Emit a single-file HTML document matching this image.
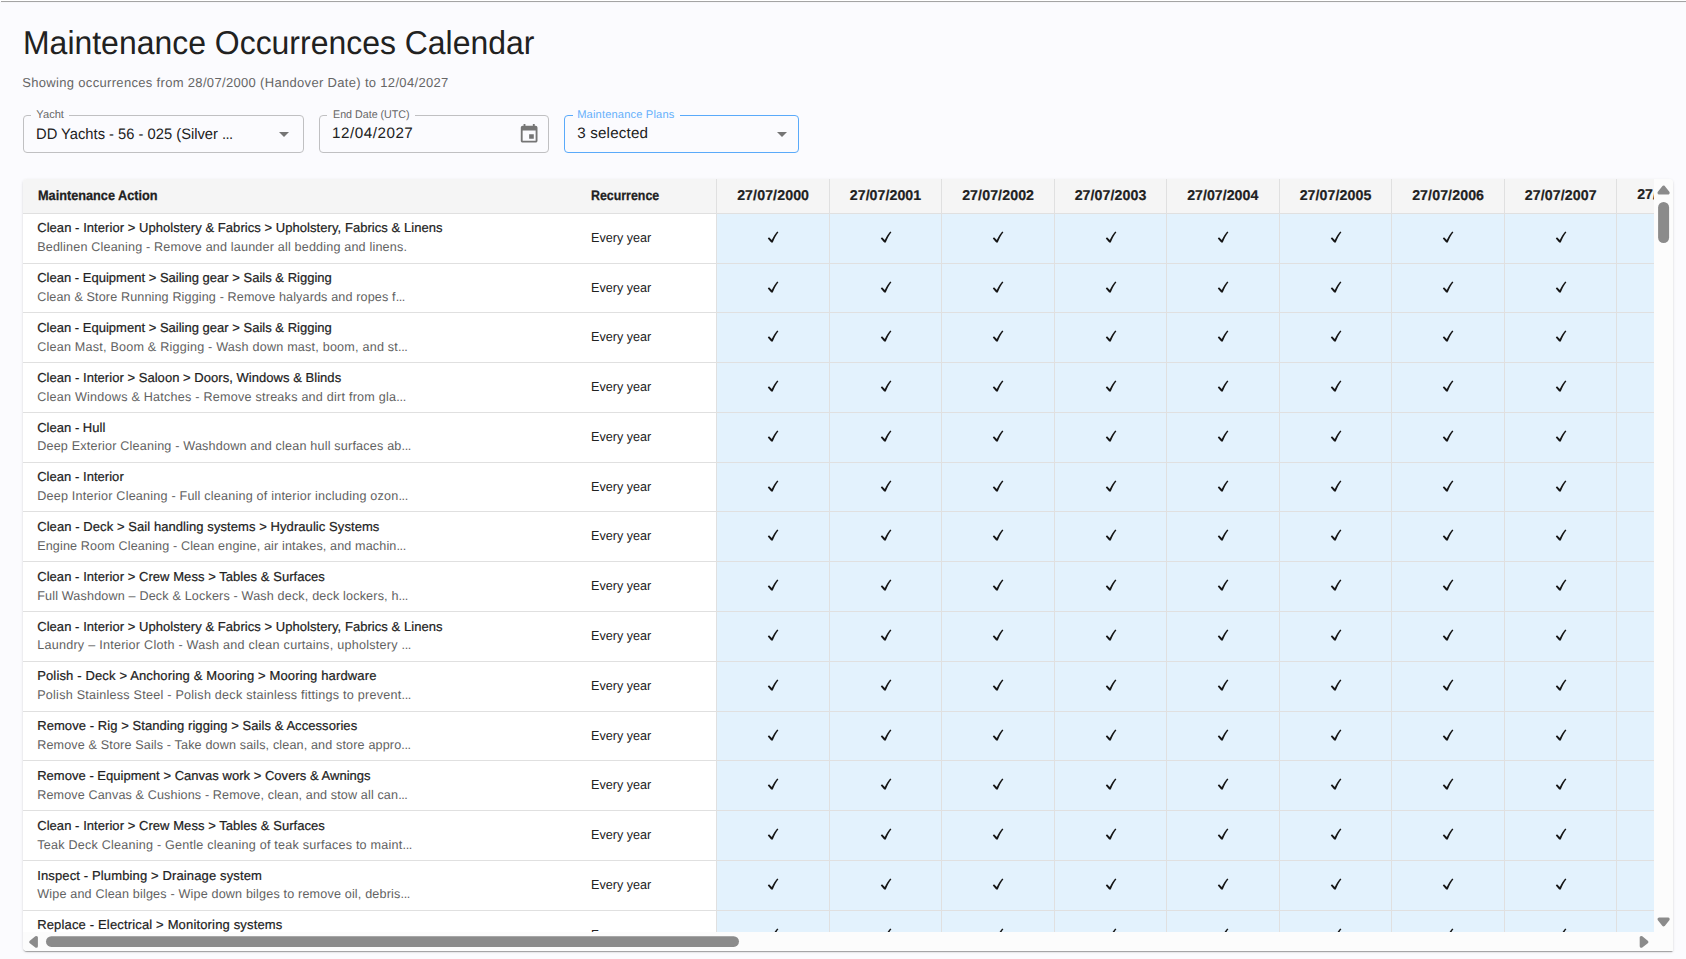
<!DOCTYPE html>
<html><head><meta charset="utf-8"><title>Maintenance Occurrences Calendar</title>
<style>
html,body{margin:0;padding:0;}
body{width:1686px;height:959px;overflow:hidden;position:relative;background:#fbfbfe;font-family:"Liberation Sans", sans-serif;}
.b{position:absolute;display:block;}
.t{position:absolute;height:0;line-height:0;white-space:nowrap;transform-origin:0 0;text-rendering:geometricPrecision;font-family:"Liberation Sans", sans-serif;}
.paper{background:#fff;border-radius:4px 4px 1px 4px;box-shadow:0px 2px 1px -1px rgba(0,0,0,0.2),0px 1px 1px 0px rgba(0,0,0,0.14),0px 1px 3px 0px rgba(0,0,0,0.12);}
</style></head><body>
<div class="b " style="left:0px;top:0px;width:1686px;height:1px;background:#fff;"></div>
<div class="b " style="left:1px;top:1px;width:1685px;height:1px;background:#a4a4a4;"></div>
<div class="b " style="left:0px;top:2px;width:1686px;height:1px;background:#f6f6f9;"></div>
<div class="t " id="t1" style="left:22.71px;top:43.00px;font-size:33px;color:#212121;transform:scaleX(0.9681);">Maintenance Occurrences Calendar</div>
<div class="t " id="t2" style="left:22.22px;top:83.00px;font-size:13px;color:#666666;letter-spacing:0.3228px;">Showing occurrences from 28/07/2000 (Handover Date) to 12/04/2027</div>
<div class="b" style="left:23px;top:115px;width:281px;height:38px;box-sizing:border-box;border:1px solid #c0c0c2;border-radius:4px;"></div>
<div class="b " style="left:31px;top:114px;width:38px;height:3px;background:#fbfbfe;"></div>
<div class="t " id="t3" style="left:36.36px;top:115.00px;font-size:11.14px;color:#666666;letter-spacing:-0.0067px;">Yacht</div>
<div class="t " id="t4" style="left:36.35px;top:135.00px;font-size:15.2px;color:#212121;transform:scaleX(0.9696);">DD Yachts - 56 - 025 (Silver <span style="letter-spacing:-0.65px">...</span></div>
<svg class="b" style="left:272.4px;top:122px" width="24" height="24" viewBox="0 0 24 24"><path d="M7 10l5 5 5-5z" fill="#757575"/></svg>
<div class="b" style="left:319px;top:115px;width:230px;height:38px;box-sizing:border-box;border:1px solid #c0c0c2;border-radius:4px;"></div>
<div class="b " style="left:327px;top:114px;width:88px;height:3px;background:#fbfbfe;"></div>
<div class="t " id="t5" style="left:332.54px;top:115.00px;font-size:11.14px;color:#666666;transform:scaleX(0.9609);">End Date (UTC)</div>
<div class="t " id="t6" style="left:331.98px;top:134.00px;font-size:15.2px;color:#212121;letter-spacing:0.5371px;">12/04/2027</div>
<svg class="b" style="left:518.2px;top:123.3px" width="22.29" height="22.29" viewBox="0 0 24 24"><path d="M17 12h-5v5h5v-5zM16 1v2H8V1H6v2H5c-1.11 0-1.99.9-1.99 2L3 19c0 1.1.89 2 2 2h14c1.1 0 2-.9 2-2V5c0-1.1-.9-2-2-2h-1V1h-2zm3 18H5V8h14v11z" fill="#757575"/></svg>
<div class="b" style="left:564px;top:115px;width:235px;height:38px;box-sizing:border-box;border:1px solid #5aaafa;border-radius:4px;"></div>
<div class="b " style="left:573px;top:114px;width:107px;height:3px;background:#fbfbfe;"></div>
<div class="t " id="t7" style="left:577.20px;top:115.00px;font-size:11.14px;color:#64b0fb;letter-spacing:0.1575px;">Maintenance Plans</div>
<div class="t " id="t8" style="left:577.24px;top:134.00px;font-size:15.2px;color:#212121;letter-spacing:0.1636px;">3 selected</div>
<svg class="b" style="left:769.5px;top:122px" width="24" height="24" viewBox="0 0 24 24"><path d="M7 10l5 5 5-5z" fill="#757575"/></svg>
<div class="b paper" style="left:23px;top:179px;width:1650px;height:772px;"></div>
<div class="b" id="clip" style="left:23px;top:179px;width:1631px;height:753px;overflow:hidden;border-radius:4px 0 0 0;">
<div class="b" style="left:-23px;top:-179px;width:1686px;height:959px;">
<div class="b " style="left:23px;top:179px;width:1631px;height:34px;background:#f5f5f5;"></div>
<div class="b " style="left:23px;top:213px;width:1631px;height:1px;background:#e0e0e0;"></div>
<div class="b " style="left:717px;top:214px;width:937px;height:718px;background:#e3f2fd;"></div>
<div class="b " style="left:23px;top:263px;width:1631px;height:1px;background:#e0e0e0;"></div>
<div class="b " style="left:23px;top:312px;width:1631px;height:1px;background:#e0e0e0;"></div>
<div class="b " style="left:23px;top:362px;width:1631px;height:1px;background:#e0e0e0;"></div>
<div class="b " style="left:23px;top:412px;width:1631px;height:1px;background:#e0e0e0;"></div>
<div class="b " style="left:23px;top:462px;width:1631px;height:1px;background:#e0e0e0;"></div>
<div class="b " style="left:23px;top:511px;width:1631px;height:1px;background:#e0e0e0;"></div>
<div class="b " style="left:23px;top:561px;width:1631px;height:1px;background:#e0e0e0;"></div>
<div class="b " style="left:23px;top:611px;width:1631px;height:1px;background:#e0e0e0;"></div>
<div class="b " style="left:23px;top:661px;width:1631px;height:1px;background:#e0e0e0;"></div>
<div class="b " style="left:23px;top:711px;width:1631px;height:1px;background:#e0e0e0;"></div>
<div class="b " style="left:23px;top:760px;width:1631px;height:1px;background:#e0e0e0;"></div>
<div class="b " style="left:23px;top:810px;width:1631px;height:1px;background:#e0e0e0;"></div>
<div class="b " style="left:23px;top:860px;width:1631px;height:1px;background:#e0e0e0;"></div>
<div class="b " style="left:23px;top:910px;width:1631px;height:1px;background:#e0e0e0;"></div>
<div class="b " style="left:716px;top:179px;width:1px;height:753px;background:#e0e0e0;"></div>
<div class="b " style="left:829px;top:179px;width:1px;height:753px;background:#e0e0e0;"></div>
<div class="b " style="left:941px;top:179px;width:1px;height:753px;background:#e0e0e0;"></div>
<div class="b " style="left:1054px;top:179px;width:1px;height:753px;background:#e0e0e0;"></div>
<div class="b " style="left:1166px;top:179px;width:1px;height:753px;background:#e0e0e0;"></div>
<div class="b " style="left:1279px;top:179px;width:1px;height:753px;background:#e0e0e0;"></div>
<div class="b " style="left:1391px;top:179px;width:1px;height:753px;background:#e0e0e0;"></div>
<div class="b " style="left:1504px;top:179px;width:1px;height:753px;background:#e0e0e0;"></div>
<div class="b " style="left:1616px;top:179px;width:1px;height:753px;background:#e0e0e0;"></div>
<div class="t " id="t9" style="left:37.58px;top:196.00px;font-size:13.7px;color:#212121;font-weight:700;transform:scaleX(0.9289);-webkit-text-stroke:0.25px #212121;">Maintenance Action</div>
<div class="t " id="t10" style="left:590.85px;top:196.00px;font-size:13.7px;color:#212121;font-weight:700;transform:scaleX(0.9052);-webkit-text-stroke:0.25px #212121;">Recurrence</div>
<div class="t " id="t11" style="left:737.14px;top:196.00px;font-size:14.2px;color:#212121;font-weight:700;letter-spacing:0.0973px;-webkit-text-stroke:0.2px #212121;">27/07/2000</div>
<div class="t " id="t12" style="left:849.78px;top:196.00px;font-size:14.2px;color:#212121;font-weight:700;letter-spacing:0.0440px;-webkit-text-stroke:0.2px #212121;">27/07/2001</div>
<div class="t " id="t13" style="left:962.13px;top:196.00px;font-size:14.2px;color:#212121;font-weight:700;letter-spacing:0.0977px;-webkit-text-stroke:0.2px #212121;">27/07/2002</div>
<div class="t " id="t14" style="left:1074.67px;top:196.00px;font-size:14.2px;color:#212121;font-weight:700;letter-spacing:0.0756px;-webkit-text-stroke:0.2px #212121;">27/07/2003</div>
<div class="t " id="t15" style="left:1187.14px;top:196.00px;font-size:14.2px;color:#212121;font-weight:700;letter-spacing:0.0169px;-webkit-text-stroke:0.2px #212121;">27/07/2004</div>
<div class="t " id="t16" style="left:1299.67px;top:196.00px;font-size:14.2px;color:#212121;font-weight:700;letter-spacing:0.0680px;-webkit-text-stroke:0.2px #212121;">27/07/2005</div>
<div class="t " id="t17" style="left:1412.13px;top:196.00px;font-size:14.2px;color:#212121;font-weight:700;letter-spacing:0.0977px;-webkit-text-stroke:0.2px #212121;">27/07/2006</div>
<div class="t " id="t18" style="left:1524.78px;top:196.00px;font-size:14.2px;color:#212121;font-weight:700;letter-spacing:0.1098px;-webkit-text-stroke:0.2px #212121;">27/07/2007</div>
<div class="t " id="t19" style="left:1637.15px;top:195.00px;font-size:14.2px;color:#212121;font-weight:700;-webkit-text-stroke:0.2px #212121;">27/07/2008</div>
<div class="t " id="t20" style="left:37.20px;top:228.00px;font-size:13px;color:#212121;letter-spacing:0.0562px;-webkit-text-stroke:0.2px #212121;">Clean - Interior &gt; Upholstery &amp; Fabrics &gt; Upholstery, Fabrics &amp; Linens</div>
<div class="t " id="t21" style="left:37.20px;top:247.00px;font-size:12.6px;color:#626262;letter-spacing:0.1726px;">Bedlinen Cleaning - Remove and launder all bedding and linens.</div>
<div class="t " id="t22" style="left:590.60px;top:238.00px;font-size:13px;color:#212121;transform:scaleX(0.9695);">Every year</div>
<svg class="b" style="left:767.00px;top:231.00px" width="12" height="13" viewBox="0 0 12 13"><path d="M2.0 6.3 L4.8 9.0 C6.3 5.8 8.1 2.9 10.2 0.5 L11.4 1.2 C9.1 4.2 7.2 7.6 5.8 11.5 L4.2 11.5 L0.8 7.5 Z" fill="#161616"/></svg>
<svg class="b" style="left:879.50px;top:231.00px" width="12" height="13" viewBox="0 0 12 13"><path d="M2.0 6.3 L4.8 9.0 C6.3 5.8 8.1 2.9 10.2 0.5 L11.4 1.2 C9.1 4.2 7.2 7.6 5.8 11.5 L4.2 11.5 L0.8 7.5 Z" fill="#161616"/></svg>
<svg class="b" style="left:992.00px;top:231.00px" width="12" height="13" viewBox="0 0 12 13"><path d="M2.0 6.3 L4.8 9.0 C6.3 5.8 8.1 2.9 10.2 0.5 L11.4 1.2 C9.1 4.2 7.2 7.6 5.8 11.5 L4.2 11.5 L0.8 7.5 Z" fill="#161616"/></svg>
<svg class="b" style="left:1104.50px;top:231.00px" width="12" height="13" viewBox="0 0 12 13"><path d="M2.0 6.3 L4.8 9.0 C6.3 5.8 8.1 2.9 10.2 0.5 L11.4 1.2 C9.1 4.2 7.2 7.6 5.8 11.5 L4.2 11.5 L0.8 7.5 Z" fill="#161616"/></svg>
<svg class="b" style="left:1217.00px;top:231.00px" width="12" height="13" viewBox="0 0 12 13"><path d="M2.0 6.3 L4.8 9.0 C6.3 5.8 8.1 2.9 10.2 0.5 L11.4 1.2 C9.1 4.2 7.2 7.6 5.8 11.5 L4.2 11.5 L0.8 7.5 Z" fill="#161616"/></svg>
<svg class="b" style="left:1329.50px;top:231.00px" width="12" height="13" viewBox="0 0 12 13"><path d="M2.0 6.3 L4.8 9.0 C6.3 5.8 8.1 2.9 10.2 0.5 L11.4 1.2 C9.1 4.2 7.2 7.6 5.8 11.5 L4.2 11.5 L0.8 7.5 Z" fill="#161616"/></svg>
<svg class="b" style="left:1442.00px;top:231.00px" width="12" height="13" viewBox="0 0 12 13"><path d="M2.0 6.3 L4.8 9.0 C6.3 5.8 8.1 2.9 10.2 0.5 L11.4 1.2 C9.1 4.2 7.2 7.6 5.8 11.5 L4.2 11.5 L0.8 7.5 Z" fill="#161616"/></svg>
<svg class="b" style="left:1554.50px;top:231.00px" width="12" height="13" viewBox="0 0 12 13"><path d="M2.0 6.3 L4.8 9.0 C6.3 5.8 8.1 2.9 10.2 0.5 L11.4 1.2 C9.1 4.2 7.2 7.6 5.8 11.5 L4.2 11.5 L0.8 7.5 Z" fill="#161616"/></svg>
<div class="t " id="t23" style="left:37.20px;top:278.00px;font-size:13px;color:#212121;letter-spacing:0.0105px;-webkit-text-stroke:0.2px #212121;">Clean - Equipment &gt; Sailing gear &gt; Sails &amp; Rigging</div>
<div class="t " id="t24" style="left:37.20px;top:297.00px;font-size:12.6px;color:#626262;letter-spacing:0.1308px;">Clean &amp; Store Running Rigging - Remove halyards and ropes f<span style="letter-spacing:-0.41px">...</span></div>
<div class="t " id="t25" style="left:590.60px;top:288.00px;font-size:13px;color:#212121;transform:scaleX(0.9695);">Every year</div>
<svg class="b" style="left:767.00px;top:281.00px" width="12" height="13" viewBox="0 0 12 13"><path d="M2.0 6.3 L4.8 9.0 C6.3 5.8 8.1 2.9 10.2 0.5 L11.4 1.2 C9.1 4.2 7.2 7.6 5.8 11.5 L4.2 11.5 L0.8 7.5 Z" fill="#161616"/></svg>
<svg class="b" style="left:879.50px;top:281.00px" width="12" height="13" viewBox="0 0 12 13"><path d="M2.0 6.3 L4.8 9.0 C6.3 5.8 8.1 2.9 10.2 0.5 L11.4 1.2 C9.1 4.2 7.2 7.6 5.8 11.5 L4.2 11.5 L0.8 7.5 Z" fill="#161616"/></svg>
<svg class="b" style="left:992.00px;top:281.00px" width="12" height="13" viewBox="0 0 12 13"><path d="M2.0 6.3 L4.8 9.0 C6.3 5.8 8.1 2.9 10.2 0.5 L11.4 1.2 C9.1 4.2 7.2 7.6 5.8 11.5 L4.2 11.5 L0.8 7.5 Z" fill="#161616"/></svg>
<svg class="b" style="left:1104.50px;top:281.00px" width="12" height="13" viewBox="0 0 12 13"><path d="M2.0 6.3 L4.8 9.0 C6.3 5.8 8.1 2.9 10.2 0.5 L11.4 1.2 C9.1 4.2 7.2 7.6 5.8 11.5 L4.2 11.5 L0.8 7.5 Z" fill="#161616"/></svg>
<svg class="b" style="left:1217.00px;top:281.00px" width="12" height="13" viewBox="0 0 12 13"><path d="M2.0 6.3 L4.8 9.0 C6.3 5.8 8.1 2.9 10.2 0.5 L11.4 1.2 C9.1 4.2 7.2 7.6 5.8 11.5 L4.2 11.5 L0.8 7.5 Z" fill="#161616"/></svg>
<svg class="b" style="left:1329.50px;top:281.00px" width="12" height="13" viewBox="0 0 12 13"><path d="M2.0 6.3 L4.8 9.0 C6.3 5.8 8.1 2.9 10.2 0.5 L11.4 1.2 C9.1 4.2 7.2 7.6 5.8 11.5 L4.2 11.5 L0.8 7.5 Z" fill="#161616"/></svg>
<svg class="b" style="left:1442.00px;top:281.00px" width="12" height="13" viewBox="0 0 12 13"><path d="M2.0 6.3 L4.8 9.0 C6.3 5.8 8.1 2.9 10.2 0.5 L11.4 1.2 C9.1 4.2 7.2 7.6 5.8 11.5 L4.2 11.5 L0.8 7.5 Z" fill="#161616"/></svg>
<svg class="b" style="left:1554.50px;top:281.00px" width="12" height="13" viewBox="0 0 12 13"><path d="M2.0 6.3 L4.8 9.0 C6.3 5.8 8.1 2.9 10.2 0.5 L11.4 1.2 C9.1 4.2 7.2 7.6 5.8 11.5 L4.2 11.5 L0.8 7.5 Z" fill="#161616"/></svg>
<div class="t " id="t26" style="left:37.20px;top:328.00px;font-size:13px;color:#212121;letter-spacing:0.0105px;-webkit-text-stroke:0.2px #212121;">Clean - Equipment &gt; Sailing gear &gt; Sails &amp; Rigging</div>
<div class="t " id="t27" style="left:37.20px;top:347.00px;font-size:12.6px;color:#626262;letter-spacing:0.2110px;">Clean Mast, Boom &amp; Rigging - Wash down mast, boom, and st<span style="letter-spacing:-0.33px">...</span></div>
<div class="t " id="t28" style="left:590.60px;top:337.00px;font-size:13px;color:#212121;transform:scaleX(0.9695);">Every year</div>
<svg class="b" style="left:767.00px;top:330.00px" width="12" height="13" viewBox="0 0 12 13"><path d="M2.0 6.3 L4.8 9.0 C6.3 5.8 8.1 2.9 10.2 0.5 L11.4 1.2 C9.1 4.2 7.2 7.6 5.8 11.5 L4.2 11.5 L0.8 7.5 Z" fill="#161616"/></svg>
<svg class="b" style="left:879.50px;top:330.00px" width="12" height="13" viewBox="0 0 12 13"><path d="M2.0 6.3 L4.8 9.0 C6.3 5.8 8.1 2.9 10.2 0.5 L11.4 1.2 C9.1 4.2 7.2 7.6 5.8 11.5 L4.2 11.5 L0.8 7.5 Z" fill="#161616"/></svg>
<svg class="b" style="left:992.00px;top:330.00px" width="12" height="13" viewBox="0 0 12 13"><path d="M2.0 6.3 L4.8 9.0 C6.3 5.8 8.1 2.9 10.2 0.5 L11.4 1.2 C9.1 4.2 7.2 7.6 5.8 11.5 L4.2 11.5 L0.8 7.5 Z" fill="#161616"/></svg>
<svg class="b" style="left:1104.50px;top:330.00px" width="12" height="13" viewBox="0 0 12 13"><path d="M2.0 6.3 L4.8 9.0 C6.3 5.8 8.1 2.9 10.2 0.5 L11.4 1.2 C9.1 4.2 7.2 7.6 5.8 11.5 L4.2 11.5 L0.8 7.5 Z" fill="#161616"/></svg>
<svg class="b" style="left:1217.00px;top:330.00px" width="12" height="13" viewBox="0 0 12 13"><path d="M2.0 6.3 L4.8 9.0 C6.3 5.8 8.1 2.9 10.2 0.5 L11.4 1.2 C9.1 4.2 7.2 7.6 5.8 11.5 L4.2 11.5 L0.8 7.5 Z" fill="#161616"/></svg>
<svg class="b" style="left:1329.50px;top:330.00px" width="12" height="13" viewBox="0 0 12 13"><path d="M2.0 6.3 L4.8 9.0 C6.3 5.8 8.1 2.9 10.2 0.5 L11.4 1.2 C9.1 4.2 7.2 7.6 5.8 11.5 L4.2 11.5 L0.8 7.5 Z" fill="#161616"/></svg>
<svg class="b" style="left:1442.00px;top:330.00px" width="12" height="13" viewBox="0 0 12 13"><path d="M2.0 6.3 L4.8 9.0 C6.3 5.8 8.1 2.9 10.2 0.5 L11.4 1.2 C9.1 4.2 7.2 7.6 5.8 11.5 L4.2 11.5 L0.8 7.5 Z" fill="#161616"/></svg>
<svg class="b" style="left:1554.50px;top:330.00px" width="12" height="13" viewBox="0 0 12 13"><path d="M2.0 6.3 L4.8 9.0 C6.3 5.8 8.1 2.9 10.2 0.5 L11.4 1.2 C9.1 4.2 7.2 7.6 5.8 11.5 L4.2 11.5 L0.8 7.5 Z" fill="#161616"/></svg>
<div class="t " id="t29" style="left:37.20px;top:378.00px;font-size:13px;color:#212121;letter-spacing:0.0385px;-webkit-text-stroke:0.2px #212121;">Clean - Interior &gt; Saloon &gt; Doors, Windows &amp; Blinds</div>
<div class="t " id="t30" style="left:37.20px;top:397.00px;font-size:12.6px;color:#626262;letter-spacing:0.2301px;">Clean Windows &amp; Hatches - Remove streaks and dirt from gla<span style="letter-spacing:-0.31px">...</span></div>
<div class="t " id="t31" style="left:590.60px;top:387.00px;font-size:13px;color:#212121;transform:scaleX(0.9695);">Every year</div>
<svg class="b" style="left:767.00px;top:380.00px" width="12" height="13" viewBox="0 0 12 13"><path d="M2.0 6.3 L4.8 9.0 C6.3 5.8 8.1 2.9 10.2 0.5 L11.4 1.2 C9.1 4.2 7.2 7.6 5.8 11.5 L4.2 11.5 L0.8 7.5 Z" fill="#161616"/></svg>
<svg class="b" style="left:879.50px;top:380.00px" width="12" height="13" viewBox="0 0 12 13"><path d="M2.0 6.3 L4.8 9.0 C6.3 5.8 8.1 2.9 10.2 0.5 L11.4 1.2 C9.1 4.2 7.2 7.6 5.8 11.5 L4.2 11.5 L0.8 7.5 Z" fill="#161616"/></svg>
<svg class="b" style="left:992.00px;top:380.00px" width="12" height="13" viewBox="0 0 12 13"><path d="M2.0 6.3 L4.8 9.0 C6.3 5.8 8.1 2.9 10.2 0.5 L11.4 1.2 C9.1 4.2 7.2 7.6 5.8 11.5 L4.2 11.5 L0.8 7.5 Z" fill="#161616"/></svg>
<svg class="b" style="left:1104.50px;top:380.00px" width="12" height="13" viewBox="0 0 12 13"><path d="M2.0 6.3 L4.8 9.0 C6.3 5.8 8.1 2.9 10.2 0.5 L11.4 1.2 C9.1 4.2 7.2 7.6 5.8 11.5 L4.2 11.5 L0.8 7.5 Z" fill="#161616"/></svg>
<svg class="b" style="left:1217.00px;top:380.00px" width="12" height="13" viewBox="0 0 12 13"><path d="M2.0 6.3 L4.8 9.0 C6.3 5.8 8.1 2.9 10.2 0.5 L11.4 1.2 C9.1 4.2 7.2 7.6 5.8 11.5 L4.2 11.5 L0.8 7.5 Z" fill="#161616"/></svg>
<svg class="b" style="left:1329.50px;top:380.00px" width="12" height="13" viewBox="0 0 12 13"><path d="M2.0 6.3 L4.8 9.0 C6.3 5.8 8.1 2.9 10.2 0.5 L11.4 1.2 C9.1 4.2 7.2 7.6 5.8 11.5 L4.2 11.5 L0.8 7.5 Z" fill="#161616"/></svg>
<svg class="b" style="left:1442.00px;top:380.00px" width="12" height="13" viewBox="0 0 12 13"><path d="M2.0 6.3 L4.8 9.0 C6.3 5.8 8.1 2.9 10.2 0.5 L11.4 1.2 C9.1 4.2 7.2 7.6 5.8 11.5 L4.2 11.5 L0.8 7.5 Z" fill="#161616"/></svg>
<svg class="b" style="left:1554.50px;top:380.00px" width="12" height="13" viewBox="0 0 12 13"><path d="M2.0 6.3 L4.8 9.0 C6.3 5.8 8.1 2.9 10.2 0.5 L11.4 1.2 C9.1 4.2 7.2 7.6 5.8 11.5 L4.2 11.5 L0.8 7.5 Z" fill="#161616"/></svg>
<div class="t " id="t32" style="left:37.20px;top:428.00px;font-size:13px;color:#212121;letter-spacing:0.0186px;-webkit-text-stroke:0.2px #212121;">Clean - Hull</div>
<div class="t " id="t33" style="left:37.20px;top:446.00px;font-size:12.6px;color:#626262;letter-spacing:0.1879px;">Deep Exterior Cleaning - Washdown and clean hull surfaces ab<span style="letter-spacing:-0.35px">...</span></div>
<div class="t " id="t34" style="left:590.60px;top:437.00px;font-size:13px;color:#212121;transform:scaleX(0.9695);">Every year</div>
<svg class="b" style="left:767.00px;top:430.00px" width="12" height="13" viewBox="0 0 12 13"><path d="M2.0 6.3 L4.8 9.0 C6.3 5.8 8.1 2.9 10.2 0.5 L11.4 1.2 C9.1 4.2 7.2 7.6 5.8 11.5 L4.2 11.5 L0.8 7.5 Z" fill="#161616"/></svg>
<svg class="b" style="left:879.50px;top:430.00px" width="12" height="13" viewBox="0 0 12 13"><path d="M2.0 6.3 L4.8 9.0 C6.3 5.8 8.1 2.9 10.2 0.5 L11.4 1.2 C9.1 4.2 7.2 7.6 5.8 11.5 L4.2 11.5 L0.8 7.5 Z" fill="#161616"/></svg>
<svg class="b" style="left:992.00px;top:430.00px" width="12" height="13" viewBox="0 0 12 13"><path d="M2.0 6.3 L4.8 9.0 C6.3 5.8 8.1 2.9 10.2 0.5 L11.4 1.2 C9.1 4.2 7.2 7.6 5.8 11.5 L4.2 11.5 L0.8 7.5 Z" fill="#161616"/></svg>
<svg class="b" style="left:1104.50px;top:430.00px" width="12" height="13" viewBox="0 0 12 13"><path d="M2.0 6.3 L4.8 9.0 C6.3 5.8 8.1 2.9 10.2 0.5 L11.4 1.2 C9.1 4.2 7.2 7.6 5.8 11.5 L4.2 11.5 L0.8 7.5 Z" fill="#161616"/></svg>
<svg class="b" style="left:1217.00px;top:430.00px" width="12" height="13" viewBox="0 0 12 13"><path d="M2.0 6.3 L4.8 9.0 C6.3 5.8 8.1 2.9 10.2 0.5 L11.4 1.2 C9.1 4.2 7.2 7.6 5.8 11.5 L4.2 11.5 L0.8 7.5 Z" fill="#161616"/></svg>
<svg class="b" style="left:1329.50px;top:430.00px" width="12" height="13" viewBox="0 0 12 13"><path d="M2.0 6.3 L4.8 9.0 C6.3 5.8 8.1 2.9 10.2 0.5 L11.4 1.2 C9.1 4.2 7.2 7.6 5.8 11.5 L4.2 11.5 L0.8 7.5 Z" fill="#161616"/></svg>
<svg class="b" style="left:1442.00px;top:430.00px" width="12" height="13" viewBox="0 0 12 13"><path d="M2.0 6.3 L4.8 9.0 C6.3 5.8 8.1 2.9 10.2 0.5 L11.4 1.2 C9.1 4.2 7.2 7.6 5.8 11.5 L4.2 11.5 L0.8 7.5 Z" fill="#161616"/></svg>
<svg class="b" style="left:1554.50px;top:430.00px" width="12" height="13" viewBox="0 0 12 13"><path d="M2.0 6.3 L4.8 9.0 C6.3 5.8 8.1 2.9 10.2 0.5 L11.4 1.2 C9.1 4.2 7.2 7.6 5.8 11.5 L4.2 11.5 L0.8 7.5 Z" fill="#161616"/></svg>
<div class="t " id="t35" style="left:37.20px;top:477.00px;font-size:13px;color:#212121;letter-spacing:0.0365px;-webkit-text-stroke:0.2px #212121;">Clean - Interior</div>
<div class="t " id="t36" style="left:37.20px;top:496.00px;font-size:12.6px;color:#626262;letter-spacing:0.2050px;">Deep Interior Cleaning - Full cleaning of interior including ozon<span style="letter-spacing:-0.34px">...</span></div>
<div class="t " id="t37" style="left:590.60px;top:487.00px;font-size:13px;color:#212121;transform:scaleX(0.9695);">Every year</div>
<svg class="b" style="left:767.00px;top:480.00px" width="12" height="13" viewBox="0 0 12 13"><path d="M2.0 6.3 L4.8 9.0 C6.3 5.8 8.1 2.9 10.2 0.5 L11.4 1.2 C9.1 4.2 7.2 7.6 5.8 11.5 L4.2 11.5 L0.8 7.5 Z" fill="#161616"/></svg>
<svg class="b" style="left:879.50px;top:480.00px" width="12" height="13" viewBox="0 0 12 13"><path d="M2.0 6.3 L4.8 9.0 C6.3 5.8 8.1 2.9 10.2 0.5 L11.4 1.2 C9.1 4.2 7.2 7.6 5.8 11.5 L4.2 11.5 L0.8 7.5 Z" fill="#161616"/></svg>
<svg class="b" style="left:992.00px;top:480.00px" width="12" height="13" viewBox="0 0 12 13"><path d="M2.0 6.3 L4.8 9.0 C6.3 5.8 8.1 2.9 10.2 0.5 L11.4 1.2 C9.1 4.2 7.2 7.6 5.8 11.5 L4.2 11.5 L0.8 7.5 Z" fill="#161616"/></svg>
<svg class="b" style="left:1104.50px;top:480.00px" width="12" height="13" viewBox="0 0 12 13"><path d="M2.0 6.3 L4.8 9.0 C6.3 5.8 8.1 2.9 10.2 0.5 L11.4 1.2 C9.1 4.2 7.2 7.6 5.8 11.5 L4.2 11.5 L0.8 7.5 Z" fill="#161616"/></svg>
<svg class="b" style="left:1217.00px;top:480.00px" width="12" height="13" viewBox="0 0 12 13"><path d="M2.0 6.3 L4.8 9.0 C6.3 5.8 8.1 2.9 10.2 0.5 L11.4 1.2 C9.1 4.2 7.2 7.6 5.8 11.5 L4.2 11.5 L0.8 7.5 Z" fill="#161616"/></svg>
<svg class="b" style="left:1329.50px;top:480.00px" width="12" height="13" viewBox="0 0 12 13"><path d="M2.0 6.3 L4.8 9.0 C6.3 5.8 8.1 2.9 10.2 0.5 L11.4 1.2 C9.1 4.2 7.2 7.6 5.8 11.5 L4.2 11.5 L0.8 7.5 Z" fill="#161616"/></svg>
<svg class="b" style="left:1442.00px;top:480.00px" width="12" height="13" viewBox="0 0 12 13"><path d="M2.0 6.3 L4.8 9.0 C6.3 5.8 8.1 2.9 10.2 0.5 L11.4 1.2 C9.1 4.2 7.2 7.6 5.8 11.5 L4.2 11.5 L0.8 7.5 Z" fill="#161616"/></svg>
<svg class="b" style="left:1554.50px;top:480.00px" width="12" height="13" viewBox="0 0 12 13"><path d="M2.0 6.3 L4.8 9.0 C6.3 5.8 8.1 2.9 10.2 0.5 L11.4 1.2 C9.1 4.2 7.2 7.6 5.8 11.5 L4.2 11.5 L0.8 7.5 Z" fill="#161616"/></svg>
<div class="t " id="t38" style="left:37.20px;top:527.00px;font-size:13px;color:#212121;letter-spacing:0.0735px;-webkit-text-stroke:0.2px #212121;">Clean - Deck &gt; Sail handling systems &gt; Hydraulic Systems</div>
<div class="t " id="t39" style="left:37.20px;top:546.00px;font-size:12.6px;color:#626262;letter-spacing:0.1314px;">Engine Room Cleaning - Clean engine, air intakes, and machin<span style="letter-spacing:-0.41px">...</span></div>
<div class="t " id="t40" style="left:590.60px;top:536.00px;font-size:13px;color:#212121;transform:scaleX(0.9695);">Every year</div>
<svg class="b" style="left:767.00px;top:529.00px" width="12" height="13" viewBox="0 0 12 13"><path d="M2.0 6.3 L4.8 9.0 C6.3 5.8 8.1 2.9 10.2 0.5 L11.4 1.2 C9.1 4.2 7.2 7.6 5.8 11.5 L4.2 11.5 L0.8 7.5 Z" fill="#161616"/></svg>
<svg class="b" style="left:879.50px;top:529.00px" width="12" height="13" viewBox="0 0 12 13"><path d="M2.0 6.3 L4.8 9.0 C6.3 5.8 8.1 2.9 10.2 0.5 L11.4 1.2 C9.1 4.2 7.2 7.6 5.8 11.5 L4.2 11.5 L0.8 7.5 Z" fill="#161616"/></svg>
<svg class="b" style="left:992.00px;top:529.00px" width="12" height="13" viewBox="0 0 12 13"><path d="M2.0 6.3 L4.8 9.0 C6.3 5.8 8.1 2.9 10.2 0.5 L11.4 1.2 C9.1 4.2 7.2 7.6 5.8 11.5 L4.2 11.5 L0.8 7.5 Z" fill="#161616"/></svg>
<svg class="b" style="left:1104.50px;top:529.00px" width="12" height="13" viewBox="0 0 12 13"><path d="M2.0 6.3 L4.8 9.0 C6.3 5.8 8.1 2.9 10.2 0.5 L11.4 1.2 C9.1 4.2 7.2 7.6 5.8 11.5 L4.2 11.5 L0.8 7.5 Z" fill="#161616"/></svg>
<svg class="b" style="left:1217.00px;top:529.00px" width="12" height="13" viewBox="0 0 12 13"><path d="M2.0 6.3 L4.8 9.0 C6.3 5.8 8.1 2.9 10.2 0.5 L11.4 1.2 C9.1 4.2 7.2 7.6 5.8 11.5 L4.2 11.5 L0.8 7.5 Z" fill="#161616"/></svg>
<svg class="b" style="left:1329.50px;top:529.00px" width="12" height="13" viewBox="0 0 12 13"><path d="M2.0 6.3 L4.8 9.0 C6.3 5.8 8.1 2.9 10.2 0.5 L11.4 1.2 C9.1 4.2 7.2 7.6 5.8 11.5 L4.2 11.5 L0.8 7.5 Z" fill="#161616"/></svg>
<svg class="b" style="left:1442.00px;top:529.00px" width="12" height="13" viewBox="0 0 12 13"><path d="M2.0 6.3 L4.8 9.0 C6.3 5.8 8.1 2.9 10.2 0.5 L11.4 1.2 C9.1 4.2 7.2 7.6 5.8 11.5 L4.2 11.5 L0.8 7.5 Z" fill="#161616"/></svg>
<svg class="b" style="left:1554.50px;top:529.00px" width="12" height="13" viewBox="0 0 12 13"><path d="M2.0 6.3 L4.8 9.0 C6.3 5.8 8.1 2.9 10.2 0.5 L11.4 1.2 C9.1 4.2 7.2 7.6 5.8 11.5 L4.2 11.5 L0.8 7.5 Z" fill="#161616"/></svg>
<div class="t " id="t41" style="left:37.20px;top:577.00px;font-size:13px;color:#212121;letter-spacing:0.0538px;-webkit-text-stroke:0.2px #212121;">Clean - Interior &gt; Crew Mess &gt; Tables &amp; Surfaces</div>
<div class="t " id="t42" style="left:37.20px;top:596.00px;font-size:12.6px;color:#626262;letter-spacing:0.1623px;">Full Washdown – Deck &amp; Lockers - Wash deck, deck lockers, h<span style="letter-spacing:-0.38px">...</span></div>
<div class="t " id="t43" style="left:590.60px;top:586.00px;font-size:13px;color:#212121;transform:scaleX(0.9695);">Every year</div>
<svg class="b" style="left:767.00px;top:579.00px" width="12" height="13" viewBox="0 0 12 13"><path d="M2.0 6.3 L4.8 9.0 C6.3 5.8 8.1 2.9 10.2 0.5 L11.4 1.2 C9.1 4.2 7.2 7.6 5.8 11.5 L4.2 11.5 L0.8 7.5 Z" fill="#161616"/></svg>
<svg class="b" style="left:879.50px;top:579.00px" width="12" height="13" viewBox="0 0 12 13"><path d="M2.0 6.3 L4.8 9.0 C6.3 5.8 8.1 2.9 10.2 0.5 L11.4 1.2 C9.1 4.2 7.2 7.6 5.8 11.5 L4.2 11.5 L0.8 7.5 Z" fill="#161616"/></svg>
<svg class="b" style="left:992.00px;top:579.00px" width="12" height="13" viewBox="0 0 12 13"><path d="M2.0 6.3 L4.8 9.0 C6.3 5.8 8.1 2.9 10.2 0.5 L11.4 1.2 C9.1 4.2 7.2 7.6 5.8 11.5 L4.2 11.5 L0.8 7.5 Z" fill="#161616"/></svg>
<svg class="b" style="left:1104.50px;top:579.00px" width="12" height="13" viewBox="0 0 12 13"><path d="M2.0 6.3 L4.8 9.0 C6.3 5.8 8.1 2.9 10.2 0.5 L11.4 1.2 C9.1 4.2 7.2 7.6 5.8 11.5 L4.2 11.5 L0.8 7.5 Z" fill="#161616"/></svg>
<svg class="b" style="left:1217.00px;top:579.00px" width="12" height="13" viewBox="0 0 12 13"><path d="M2.0 6.3 L4.8 9.0 C6.3 5.8 8.1 2.9 10.2 0.5 L11.4 1.2 C9.1 4.2 7.2 7.6 5.8 11.5 L4.2 11.5 L0.8 7.5 Z" fill="#161616"/></svg>
<svg class="b" style="left:1329.50px;top:579.00px" width="12" height="13" viewBox="0 0 12 13"><path d="M2.0 6.3 L4.8 9.0 C6.3 5.8 8.1 2.9 10.2 0.5 L11.4 1.2 C9.1 4.2 7.2 7.6 5.8 11.5 L4.2 11.5 L0.8 7.5 Z" fill="#161616"/></svg>
<svg class="b" style="left:1442.00px;top:579.00px" width="12" height="13" viewBox="0 0 12 13"><path d="M2.0 6.3 L4.8 9.0 C6.3 5.8 8.1 2.9 10.2 0.5 L11.4 1.2 C9.1 4.2 7.2 7.6 5.8 11.5 L4.2 11.5 L0.8 7.5 Z" fill="#161616"/></svg>
<svg class="b" style="left:1554.50px;top:579.00px" width="12" height="13" viewBox="0 0 12 13"><path d="M2.0 6.3 L4.8 9.0 C6.3 5.8 8.1 2.9 10.2 0.5 L11.4 1.2 C9.1 4.2 7.2 7.6 5.8 11.5 L4.2 11.5 L0.8 7.5 Z" fill="#161616"/></svg>
<div class="t " id="t44" style="left:37.20px;top:627.00px;font-size:13px;color:#212121;letter-spacing:0.0562px;-webkit-text-stroke:0.2px #212121;">Clean - Interior &gt; Upholstery &amp; Fabrics &gt; Upholstery, Fabrics &amp; Linens</div>
<div class="t " id="t45" style="left:37.20px;top:645.00px;font-size:12.6px;color:#626262;letter-spacing:0.2448px;">Laundry – Interior Cloth - Wash and clean curtains, upholstery <span style="letter-spacing:-0.30px">...</span></div>
<div class="t " id="t46" style="left:590.60px;top:636.00px;font-size:13px;color:#212121;transform:scaleX(0.9695);">Every year</div>
<svg class="b" style="left:767.00px;top:629.00px" width="12" height="13" viewBox="0 0 12 13"><path d="M2.0 6.3 L4.8 9.0 C6.3 5.8 8.1 2.9 10.2 0.5 L11.4 1.2 C9.1 4.2 7.2 7.6 5.8 11.5 L4.2 11.5 L0.8 7.5 Z" fill="#161616"/></svg>
<svg class="b" style="left:879.50px;top:629.00px" width="12" height="13" viewBox="0 0 12 13"><path d="M2.0 6.3 L4.8 9.0 C6.3 5.8 8.1 2.9 10.2 0.5 L11.4 1.2 C9.1 4.2 7.2 7.6 5.8 11.5 L4.2 11.5 L0.8 7.5 Z" fill="#161616"/></svg>
<svg class="b" style="left:992.00px;top:629.00px" width="12" height="13" viewBox="0 0 12 13"><path d="M2.0 6.3 L4.8 9.0 C6.3 5.8 8.1 2.9 10.2 0.5 L11.4 1.2 C9.1 4.2 7.2 7.6 5.8 11.5 L4.2 11.5 L0.8 7.5 Z" fill="#161616"/></svg>
<svg class="b" style="left:1104.50px;top:629.00px" width="12" height="13" viewBox="0 0 12 13"><path d="M2.0 6.3 L4.8 9.0 C6.3 5.8 8.1 2.9 10.2 0.5 L11.4 1.2 C9.1 4.2 7.2 7.6 5.8 11.5 L4.2 11.5 L0.8 7.5 Z" fill="#161616"/></svg>
<svg class="b" style="left:1217.00px;top:629.00px" width="12" height="13" viewBox="0 0 12 13"><path d="M2.0 6.3 L4.8 9.0 C6.3 5.8 8.1 2.9 10.2 0.5 L11.4 1.2 C9.1 4.2 7.2 7.6 5.8 11.5 L4.2 11.5 L0.8 7.5 Z" fill="#161616"/></svg>
<svg class="b" style="left:1329.50px;top:629.00px" width="12" height="13" viewBox="0 0 12 13"><path d="M2.0 6.3 L4.8 9.0 C6.3 5.8 8.1 2.9 10.2 0.5 L11.4 1.2 C9.1 4.2 7.2 7.6 5.8 11.5 L4.2 11.5 L0.8 7.5 Z" fill="#161616"/></svg>
<svg class="b" style="left:1442.00px;top:629.00px" width="12" height="13" viewBox="0 0 12 13"><path d="M2.0 6.3 L4.8 9.0 C6.3 5.8 8.1 2.9 10.2 0.5 L11.4 1.2 C9.1 4.2 7.2 7.6 5.8 11.5 L4.2 11.5 L0.8 7.5 Z" fill="#161616"/></svg>
<svg class="b" style="left:1554.50px;top:629.00px" width="12" height="13" viewBox="0 0 12 13"><path d="M2.0 6.3 L4.8 9.0 C6.3 5.8 8.1 2.9 10.2 0.5 L11.4 1.2 C9.1 4.2 7.2 7.6 5.8 11.5 L4.2 11.5 L0.8 7.5 Z" fill="#161616"/></svg>
<div class="t " id="t47" style="left:37.20px;top:676.00px;font-size:13px;color:#212121;letter-spacing:0.1427px;-webkit-text-stroke:0.2px #212121;">Polish - Deck &gt; Anchoring &amp; Mooring &gt; Mooring hardware</div>
<div class="t " id="t48" style="left:37.20px;top:695.00px;font-size:12.6px;color:#626262;letter-spacing:0.2370px;">Polish Stainless Steel - Polish deck stainless fittings to prevent<span style="letter-spacing:-0.30px">...</span></div>
<div class="t " id="t49" style="left:590.60px;top:686.00px;font-size:13px;color:#212121;transform:scaleX(0.9695);">Every year</div>
<svg class="b" style="left:767.00px;top:679.00px" width="12" height="13" viewBox="0 0 12 13"><path d="M2.0 6.3 L4.8 9.0 C6.3 5.8 8.1 2.9 10.2 0.5 L11.4 1.2 C9.1 4.2 7.2 7.6 5.8 11.5 L4.2 11.5 L0.8 7.5 Z" fill="#161616"/></svg>
<svg class="b" style="left:879.50px;top:679.00px" width="12" height="13" viewBox="0 0 12 13"><path d="M2.0 6.3 L4.8 9.0 C6.3 5.8 8.1 2.9 10.2 0.5 L11.4 1.2 C9.1 4.2 7.2 7.6 5.8 11.5 L4.2 11.5 L0.8 7.5 Z" fill="#161616"/></svg>
<svg class="b" style="left:992.00px;top:679.00px" width="12" height="13" viewBox="0 0 12 13"><path d="M2.0 6.3 L4.8 9.0 C6.3 5.8 8.1 2.9 10.2 0.5 L11.4 1.2 C9.1 4.2 7.2 7.6 5.8 11.5 L4.2 11.5 L0.8 7.5 Z" fill="#161616"/></svg>
<svg class="b" style="left:1104.50px;top:679.00px" width="12" height="13" viewBox="0 0 12 13"><path d="M2.0 6.3 L4.8 9.0 C6.3 5.8 8.1 2.9 10.2 0.5 L11.4 1.2 C9.1 4.2 7.2 7.6 5.8 11.5 L4.2 11.5 L0.8 7.5 Z" fill="#161616"/></svg>
<svg class="b" style="left:1217.00px;top:679.00px" width="12" height="13" viewBox="0 0 12 13"><path d="M2.0 6.3 L4.8 9.0 C6.3 5.8 8.1 2.9 10.2 0.5 L11.4 1.2 C9.1 4.2 7.2 7.6 5.8 11.5 L4.2 11.5 L0.8 7.5 Z" fill="#161616"/></svg>
<svg class="b" style="left:1329.50px;top:679.00px" width="12" height="13" viewBox="0 0 12 13"><path d="M2.0 6.3 L4.8 9.0 C6.3 5.8 8.1 2.9 10.2 0.5 L11.4 1.2 C9.1 4.2 7.2 7.6 5.8 11.5 L4.2 11.5 L0.8 7.5 Z" fill="#161616"/></svg>
<svg class="b" style="left:1442.00px;top:679.00px" width="12" height="13" viewBox="0 0 12 13"><path d="M2.0 6.3 L4.8 9.0 C6.3 5.8 8.1 2.9 10.2 0.5 L11.4 1.2 C9.1 4.2 7.2 7.6 5.8 11.5 L4.2 11.5 L0.8 7.5 Z" fill="#161616"/></svg>
<svg class="b" style="left:1554.50px;top:679.00px" width="12" height="13" viewBox="0 0 12 13"><path d="M2.0 6.3 L4.8 9.0 C6.3 5.8 8.1 2.9 10.2 0.5 L11.4 1.2 C9.1 4.2 7.2 7.6 5.8 11.5 L4.2 11.5 L0.8 7.5 Z" fill="#161616"/></svg>
<div class="t " id="t50" style="left:37.20px;top:726.00px;font-size:13px;color:#212121;letter-spacing:0.0664px;-webkit-text-stroke:0.2px #212121;">Remove - Rig &gt; Standing rigging &gt; Sails &amp; Accessories</div>
<div class="t " id="t51" style="left:37.20px;top:745.00px;font-size:12.6px;color:#626262;letter-spacing:0.1410px;">Remove &amp; Store Sails - Take down sails, clean, and store appro<span style="letter-spacing:-0.40px">...</span></div>
<div class="t " id="t52" style="left:590.60px;top:736.00px;font-size:13px;color:#212121;transform:scaleX(0.9695);">Every year</div>
<svg class="b" style="left:767.00px;top:729.00px" width="12" height="13" viewBox="0 0 12 13"><path d="M2.0 6.3 L4.8 9.0 C6.3 5.8 8.1 2.9 10.2 0.5 L11.4 1.2 C9.1 4.2 7.2 7.6 5.8 11.5 L4.2 11.5 L0.8 7.5 Z" fill="#161616"/></svg>
<svg class="b" style="left:879.50px;top:729.00px" width="12" height="13" viewBox="0 0 12 13"><path d="M2.0 6.3 L4.8 9.0 C6.3 5.8 8.1 2.9 10.2 0.5 L11.4 1.2 C9.1 4.2 7.2 7.6 5.8 11.5 L4.2 11.5 L0.8 7.5 Z" fill="#161616"/></svg>
<svg class="b" style="left:992.00px;top:729.00px" width="12" height="13" viewBox="0 0 12 13"><path d="M2.0 6.3 L4.8 9.0 C6.3 5.8 8.1 2.9 10.2 0.5 L11.4 1.2 C9.1 4.2 7.2 7.6 5.8 11.5 L4.2 11.5 L0.8 7.5 Z" fill="#161616"/></svg>
<svg class="b" style="left:1104.50px;top:729.00px" width="12" height="13" viewBox="0 0 12 13"><path d="M2.0 6.3 L4.8 9.0 C6.3 5.8 8.1 2.9 10.2 0.5 L11.4 1.2 C9.1 4.2 7.2 7.6 5.8 11.5 L4.2 11.5 L0.8 7.5 Z" fill="#161616"/></svg>
<svg class="b" style="left:1217.00px;top:729.00px" width="12" height="13" viewBox="0 0 12 13"><path d="M2.0 6.3 L4.8 9.0 C6.3 5.8 8.1 2.9 10.2 0.5 L11.4 1.2 C9.1 4.2 7.2 7.6 5.8 11.5 L4.2 11.5 L0.8 7.5 Z" fill="#161616"/></svg>
<svg class="b" style="left:1329.50px;top:729.00px" width="12" height="13" viewBox="0 0 12 13"><path d="M2.0 6.3 L4.8 9.0 C6.3 5.8 8.1 2.9 10.2 0.5 L11.4 1.2 C9.1 4.2 7.2 7.6 5.8 11.5 L4.2 11.5 L0.8 7.5 Z" fill="#161616"/></svg>
<svg class="b" style="left:1442.00px;top:729.00px" width="12" height="13" viewBox="0 0 12 13"><path d="M2.0 6.3 L4.8 9.0 C6.3 5.8 8.1 2.9 10.2 0.5 L11.4 1.2 C9.1 4.2 7.2 7.6 5.8 11.5 L4.2 11.5 L0.8 7.5 Z" fill="#161616"/></svg>
<svg class="b" style="left:1554.50px;top:729.00px" width="12" height="13" viewBox="0 0 12 13"><path d="M2.0 6.3 L4.8 9.0 C6.3 5.8 8.1 2.9 10.2 0.5 L11.4 1.2 C9.1 4.2 7.2 7.6 5.8 11.5 L4.2 11.5 L0.8 7.5 Z" fill="#161616"/></svg>
<div class="t " id="t53" style="left:37.20px;top:776.00px;font-size:13px;color:#212121;letter-spacing:0.0252px;-webkit-text-stroke:0.2px #212121;">Remove - Equipment &gt; Canvas work &gt; Covers &amp; Awnings</div>
<div class="t " id="t54" style="left:37.20px;top:795.00px;font-size:12.6px;color:#626262;letter-spacing:0.1284px;">Remove Canvas &amp; Cushions - Remove, clean, and stow all can<span style="letter-spacing:-0.41px">...</span></div>
<div class="t " id="t55" style="left:590.60px;top:785.00px;font-size:13px;color:#212121;transform:scaleX(0.9695);">Every year</div>
<svg class="b" style="left:767.00px;top:778.00px" width="12" height="13" viewBox="0 0 12 13"><path d="M2.0 6.3 L4.8 9.0 C6.3 5.8 8.1 2.9 10.2 0.5 L11.4 1.2 C9.1 4.2 7.2 7.6 5.8 11.5 L4.2 11.5 L0.8 7.5 Z" fill="#161616"/></svg>
<svg class="b" style="left:879.50px;top:778.00px" width="12" height="13" viewBox="0 0 12 13"><path d="M2.0 6.3 L4.8 9.0 C6.3 5.8 8.1 2.9 10.2 0.5 L11.4 1.2 C9.1 4.2 7.2 7.6 5.8 11.5 L4.2 11.5 L0.8 7.5 Z" fill="#161616"/></svg>
<svg class="b" style="left:992.00px;top:778.00px" width="12" height="13" viewBox="0 0 12 13"><path d="M2.0 6.3 L4.8 9.0 C6.3 5.8 8.1 2.9 10.2 0.5 L11.4 1.2 C9.1 4.2 7.2 7.6 5.8 11.5 L4.2 11.5 L0.8 7.5 Z" fill="#161616"/></svg>
<svg class="b" style="left:1104.50px;top:778.00px" width="12" height="13" viewBox="0 0 12 13"><path d="M2.0 6.3 L4.8 9.0 C6.3 5.8 8.1 2.9 10.2 0.5 L11.4 1.2 C9.1 4.2 7.2 7.6 5.8 11.5 L4.2 11.5 L0.8 7.5 Z" fill="#161616"/></svg>
<svg class="b" style="left:1217.00px;top:778.00px" width="12" height="13" viewBox="0 0 12 13"><path d="M2.0 6.3 L4.8 9.0 C6.3 5.8 8.1 2.9 10.2 0.5 L11.4 1.2 C9.1 4.2 7.2 7.6 5.8 11.5 L4.2 11.5 L0.8 7.5 Z" fill="#161616"/></svg>
<svg class="b" style="left:1329.50px;top:778.00px" width="12" height="13" viewBox="0 0 12 13"><path d="M2.0 6.3 L4.8 9.0 C6.3 5.8 8.1 2.9 10.2 0.5 L11.4 1.2 C9.1 4.2 7.2 7.6 5.8 11.5 L4.2 11.5 L0.8 7.5 Z" fill="#161616"/></svg>
<svg class="b" style="left:1442.00px;top:778.00px" width="12" height="13" viewBox="0 0 12 13"><path d="M2.0 6.3 L4.8 9.0 C6.3 5.8 8.1 2.9 10.2 0.5 L11.4 1.2 C9.1 4.2 7.2 7.6 5.8 11.5 L4.2 11.5 L0.8 7.5 Z" fill="#161616"/></svg>
<svg class="b" style="left:1554.50px;top:778.00px" width="12" height="13" viewBox="0 0 12 13"><path d="M2.0 6.3 L4.8 9.0 C6.3 5.8 8.1 2.9 10.2 0.5 L11.4 1.2 C9.1 4.2 7.2 7.6 5.8 11.5 L4.2 11.5 L0.8 7.5 Z" fill="#161616"/></svg>
<div class="t " id="t56" style="left:37.20px;top:826.00px;font-size:13px;color:#212121;letter-spacing:0.0538px;-webkit-text-stroke:0.2px #212121;">Clean - Interior &gt; Crew Mess &gt; Tables &amp; Surfaces</div>
<div class="t " id="t57" style="left:37.20px;top:845.00px;font-size:12.6px;color:#626262;letter-spacing:0.2240px;">Teak Deck Cleaning - Gentle cleaning of teak surfaces to maint<span style="letter-spacing:-0.32px">...</span></div>
<div class="t " id="t58" style="left:590.60px;top:835.00px;font-size:13px;color:#212121;transform:scaleX(0.9695);">Every year</div>
<svg class="b" style="left:767.00px;top:828.00px" width="12" height="13" viewBox="0 0 12 13"><path d="M2.0 6.3 L4.8 9.0 C6.3 5.8 8.1 2.9 10.2 0.5 L11.4 1.2 C9.1 4.2 7.2 7.6 5.8 11.5 L4.2 11.5 L0.8 7.5 Z" fill="#161616"/></svg>
<svg class="b" style="left:879.50px;top:828.00px" width="12" height="13" viewBox="0 0 12 13"><path d="M2.0 6.3 L4.8 9.0 C6.3 5.8 8.1 2.9 10.2 0.5 L11.4 1.2 C9.1 4.2 7.2 7.6 5.8 11.5 L4.2 11.5 L0.8 7.5 Z" fill="#161616"/></svg>
<svg class="b" style="left:992.00px;top:828.00px" width="12" height="13" viewBox="0 0 12 13"><path d="M2.0 6.3 L4.8 9.0 C6.3 5.8 8.1 2.9 10.2 0.5 L11.4 1.2 C9.1 4.2 7.2 7.6 5.8 11.5 L4.2 11.5 L0.8 7.5 Z" fill="#161616"/></svg>
<svg class="b" style="left:1104.50px;top:828.00px" width="12" height="13" viewBox="0 0 12 13"><path d="M2.0 6.3 L4.8 9.0 C6.3 5.8 8.1 2.9 10.2 0.5 L11.4 1.2 C9.1 4.2 7.2 7.6 5.8 11.5 L4.2 11.5 L0.8 7.5 Z" fill="#161616"/></svg>
<svg class="b" style="left:1217.00px;top:828.00px" width="12" height="13" viewBox="0 0 12 13"><path d="M2.0 6.3 L4.8 9.0 C6.3 5.8 8.1 2.9 10.2 0.5 L11.4 1.2 C9.1 4.2 7.2 7.6 5.8 11.5 L4.2 11.5 L0.8 7.5 Z" fill="#161616"/></svg>
<svg class="b" style="left:1329.50px;top:828.00px" width="12" height="13" viewBox="0 0 12 13"><path d="M2.0 6.3 L4.8 9.0 C6.3 5.8 8.1 2.9 10.2 0.5 L11.4 1.2 C9.1 4.2 7.2 7.6 5.8 11.5 L4.2 11.5 L0.8 7.5 Z" fill="#161616"/></svg>
<svg class="b" style="left:1442.00px;top:828.00px" width="12" height="13" viewBox="0 0 12 13"><path d="M2.0 6.3 L4.8 9.0 C6.3 5.8 8.1 2.9 10.2 0.5 L11.4 1.2 C9.1 4.2 7.2 7.6 5.8 11.5 L4.2 11.5 L0.8 7.5 Z" fill="#161616"/></svg>
<svg class="b" style="left:1554.50px;top:828.00px" width="12" height="13" viewBox="0 0 12 13"><path d="M2.0 6.3 L4.8 9.0 C6.3 5.8 8.1 2.9 10.2 0.5 L11.4 1.2 C9.1 4.2 7.2 7.6 5.8 11.5 L4.2 11.5 L0.8 7.5 Z" fill="#161616"/></svg>
<div class="t " id="t59" style="left:37.20px;top:876.00px;font-size:13px;color:#212121;letter-spacing:0.1338px;-webkit-text-stroke:0.2px #212121;">Inspect - Plumbing &gt; Drainage system</div>
<div class="t " id="t60" style="left:37.20px;top:894.00px;font-size:12.6px;color:#626262;letter-spacing:0.1694px;">Wipe and Clean bilges - Wipe down bilges to remove oil, debris<span style="letter-spacing:-0.37px">...</span></div>
<div class="t " id="t61" style="left:590.60px;top:885.00px;font-size:13px;color:#212121;transform:scaleX(0.9695);">Every year</div>
<svg class="b" style="left:767.00px;top:878.00px" width="12" height="13" viewBox="0 0 12 13"><path d="M2.0 6.3 L4.8 9.0 C6.3 5.8 8.1 2.9 10.2 0.5 L11.4 1.2 C9.1 4.2 7.2 7.6 5.8 11.5 L4.2 11.5 L0.8 7.5 Z" fill="#161616"/></svg>
<svg class="b" style="left:879.50px;top:878.00px" width="12" height="13" viewBox="0 0 12 13"><path d="M2.0 6.3 L4.8 9.0 C6.3 5.8 8.1 2.9 10.2 0.5 L11.4 1.2 C9.1 4.2 7.2 7.6 5.8 11.5 L4.2 11.5 L0.8 7.5 Z" fill="#161616"/></svg>
<svg class="b" style="left:992.00px;top:878.00px" width="12" height="13" viewBox="0 0 12 13"><path d="M2.0 6.3 L4.8 9.0 C6.3 5.8 8.1 2.9 10.2 0.5 L11.4 1.2 C9.1 4.2 7.2 7.6 5.8 11.5 L4.2 11.5 L0.8 7.5 Z" fill="#161616"/></svg>
<svg class="b" style="left:1104.50px;top:878.00px" width="12" height="13" viewBox="0 0 12 13"><path d="M2.0 6.3 L4.8 9.0 C6.3 5.8 8.1 2.9 10.2 0.5 L11.4 1.2 C9.1 4.2 7.2 7.6 5.8 11.5 L4.2 11.5 L0.8 7.5 Z" fill="#161616"/></svg>
<svg class="b" style="left:1217.00px;top:878.00px" width="12" height="13" viewBox="0 0 12 13"><path d="M2.0 6.3 L4.8 9.0 C6.3 5.8 8.1 2.9 10.2 0.5 L11.4 1.2 C9.1 4.2 7.2 7.6 5.8 11.5 L4.2 11.5 L0.8 7.5 Z" fill="#161616"/></svg>
<svg class="b" style="left:1329.50px;top:878.00px" width="12" height="13" viewBox="0 0 12 13"><path d="M2.0 6.3 L4.8 9.0 C6.3 5.8 8.1 2.9 10.2 0.5 L11.4 1.2 C9.1 4.2 7.2 7.6 5.8 11.5 L4.2 11.5 L0.8 7.5 Z" fill="#161616"/></svg>
<svg class="b" style="left:1442.00px;top:878.00px" width="12" height="13" viewBox="0 0 12 13"><path d="M2.0 6.3 L4.8 9.0 C6.3 5.8 8.1 2.9 10.2 0.5 L11.4 1.2 C9.1 4.2 7.2 7.6 5.8 11.5 L4.2 11.5 L0.8 7.5 Z" fill="#161616"/></svg>
<svg class="b" style="left:1554.50px;top:878.00px" width="12" height="13" viewBox="0 0 12 13"><path d="M2.0 6.3 L4.8 9.0 C6.3 5.8 8.1 2.9 10.2 0.5 L11.4 1.2 C9.1 4.2 7.2 7.6 5.8 11.5 L4.2 11.5 L0.8 7.5 Z" fill="#161616"/></svg>
<div class="t " id="t62" style="left:37.20px;top:925.00px;font-size:13px;color:#212121;letter-spacing:0.1583px;-webkit-text-stroke:0.2px #212121;">Replace - Electrical &gt; Monitoring systems</div>
<div class="t " id="t63" style="left:37.20px;top:944.00px;font-size:12.6px;color:#626262;letter-spacing:0.3400px;">Test Alarm Panels - Verify engine and bilge alarms operate c<span style="letter-spacing:-0.20px">...</span></div>
<div class="t " id="t64" style="left:590.60px;top:935.00px;font-size:13px;color:#212121;transform:scaleX(0.9219);">Every year</div>
<svg class="b" style="left:767.00px;top:928.00px" width="12" height="13" viewBox="0 0 12 13"><path d="M2.0 6.3 L4.8 9.0 C6.3 5.8 8.1 2.9 10.2 0.5 L11.4 1.2 C9.1 4.2 7.2 7.6 5.8 11.5 L4.2 11.5 L0.8 7.5 Z" fill="#161616"/></svg>
<svg class="b" style="left:879.50px;top:928.00px" width="12" height="13" viewBox="0 0 12 13"><path d="M2.0 6.3 L4.8 9.0 C6.3 5.8 8.1 2.9 10.2 0.5 L11.4 1.2 C9.1 4.2 7.2 7.6 5.8 11.5 L4.2 11.5 L0.8 7.5 Z" fill="#161616"/></svg>
<svg class="b" style="left:992.00px;top:928.00px" width="12" height="13" viewBox="0 0 12 13"><path d="M2.0 6.3 L4.8 9.0 C6.3 5.8 8.1 2.9 10.2 0.5 L11.4 1.2 C9.1 4.2 7.2 7.6 5.8 11.5 L4.2 11.5 L0.8 7.5 Z" fill="#161616"/></svg>
<svg class="b" style="left:1104.50px;top:928.00px" width="12" height="13" viewBox="0 0 12 13"><path d="M2.0 6.3 L4.8 9.0 C6.3 5.8 8.1 2.9 10.2 0.5 L11.4 1.2 C9.1 4.2 7.2 7.6 5.8 11.5 L4.2 11.5 L0.8 7.5 Z" fill="#161616"/></svg>
<svg class="b" style="left:1217.00px;top:928.00px" width="12" height="13" viewBox="0 0 12 13"><path d="M2.0 6.3 L4.8 9.0 C6.3 5.8 8.1 2.9 10.2 0.5 L11.4 1.2 C9.1 4.2 7.2 7.6 5.8 11.5 L4.2 11.5 L0.8 7.5 Z" fill="#161616"/></svg>
<svg class="b" style="left:1329.50px;top:928.00px" width="12" height="13" viewBox="0 0 12 13"><path d="M2.0 6.3 L4.8 9.0 C6.3 5.8 8.1 2.9 10.2 0.5 L11.4 1.2 C9.1 4.2 7.2 7.6 5.8 11.5 L4.2 11.5 L0.8 7.5 Z" fill="#161616"/></svg>
<svg class="b" style="left:1442.00px;top:928.00px" width="12" height="13" viewBox="0 0 12 13"><path d="M2.0 6.3 L4.8 9.0 C6.3 5.8 8.1 2.9 10.2 0.5 L11.4 1.2 C9.1 4.2 7.2 7.6 5.8 11.5 L4.2 11.5 L0.8 7.5 Z" fill="#161616"/></svg>
<svg class="b" style="left:1554.50px;top:928.00px" width="12" height="13" viewBox="0 0 12 13"><path d="M2.0 6.3 L4.8 9.0 C6.3 5.8 8.1 2.9 10.2 0.5 L11.4 1.2 C9.1 4.2 7.2 7.6 5.8 11.5 L4.2 11.5 L0.8 7.5 Z" fill="#161616"/></svg>
</div></div>
<div class="b " style="left:1654px;top:179px;width:19px;height:753px;background:#fcfcfc;border-radius:0 4px 0 0;"></div>
<div class="b " style="left:23px;top:932px;width:1650px;height:19px;background:#fcfcfc;border-radius:0 0 1px 4px;"></div>
<svg class="b" style="left:1654px;top:179px" width="19" height="753" viewBox="0 0 19 753"><path d="M9.6 8.2 L14.0 13.9 L5.2 13.9 Z" fill="#8b8b8b" stroke="#8b8b8b" stroke-width="3.4" stroke-linejoin="round"/><rect x="4.1" y="23" width="11" height="41" rx="5.5" fill="#8b8b8b"/><path d="M9.6 745.6 L14.0 740.1 L5.2 740.1 Z" fill="#8b8b8b" stroke="#8b8b8b" stroke-width="3.4" stroke-linejoin="round"/></svg>
<svg class="b" style="left:23px;top:932px" width="1631" height="19" viewBox="0 0 1631 19"><path d="M7.8 9.9 L13.3 5.6 L13.3 14.2 Z" fill="#8b8b8b" stroke="#8b8b8b" stroke-width="3.2" stroke-linejoin="round"/><rect x="23" y="4.3" width="693" height="10.6" rx="5.3" fill="#8b8b8b"/><path d="M1623.8 9.9 L1618.3 5.6 L1618.3 14.2 Z" fill="#8b8b8b" stroke="#8b8b8b" stroke-width="3.2" stroke-linejoin="round"/></svg>
</body></html>
